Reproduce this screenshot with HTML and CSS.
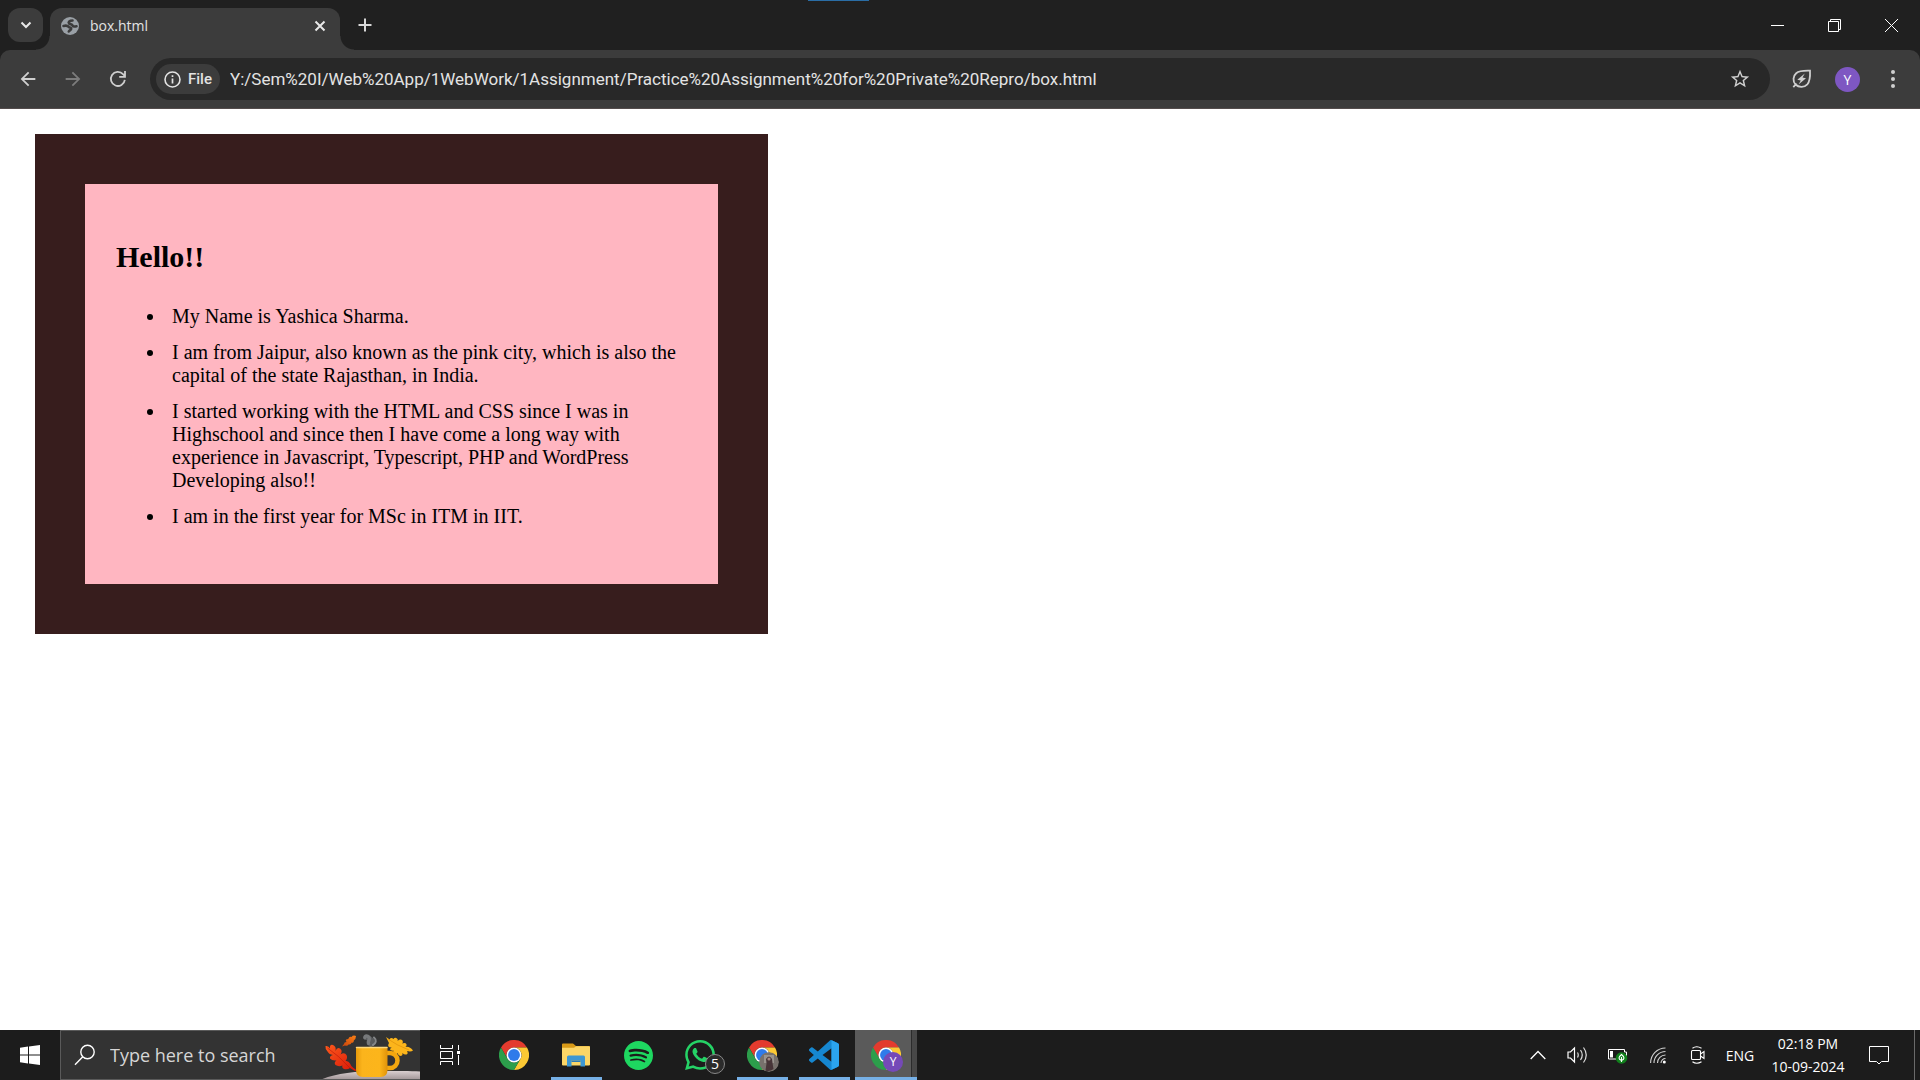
FILE: index.html
```html
<!DOCTYPE html>
<html lang="en">
<head>
<meta charset="utf-8">
<title>box.html</title>
<link rel="stylesheet" href="styles.css">
</head>
<body>
<svg class="defs" aria-hidden="true">
  <defs>
    <path id="wedge" d="M24 12H44.8A24 24 0 0 0 3.2 12L13.6 30A12 12 0 0 1 24 12Z"/>
    <symbol id="chrome" viewBox="0 0 48 48">
      <use href="#wedge" fill="#e33b2e"/>
      <use href="#wedge" fill="#fcc934" transform="rotate(120 24 24)"/>
      <use href="#wedge" fill="#2c9e4b" transform="rotate(240 24 24)"/>
      <circle cx="24" cy="24" r="12" fill="#fff"/>
      <circle cx="24" cy="24" r="9.5" fill="#2f7bea"/>
    </symbol>
  </defs>
</svg>

<header class="browser">
  <div class="tabstrip">
    <button class="tab-search" aria-label="Search tabs"><svg width="12" height="12" viewBox="0 0 12 12"><path d="M1.500 3.500L6 8l4.500-4.500" fill="none" stroke="#e8e8e8" stroke-width="2"/></svg></button>
    <div class="tab">
      <svg width="18" height="18" viewBox="0 0 18 18"><circle cx="9" cy="9" r="9" fill="#9aa0a6"/><path d="M11.500 3.500C8.500 3.500 7 5 8 6.300c1 1.200 3 .8 3.500 2.200.4 1.200 1.700 1.300 4 .8M2.500 9c2-.5 4-.5 5 .7.800 1.200 2.700.5 2.700 2 0 1.300-1.700 1.300-2.400 2.800" fill="none" stroke="#3c3c3c" stroke-width="2.600" stroke-linecap="round"/></svg>
      <span class="tab-title">box.html</span>
      <button class="tab-close" aria-label="Close tab"><svg width="12" height="12" viewBox="0 0 12 12"><path d="M1.500 1.500l9 9M10.500 1.500l-9 9" stroke="#e8e8e8" stroke-width="2"/></svg></button>
    </div>
    <button class="new-tab" aria-label="New tab"><svg width="14" height="14" viewBox="0 0 14 14"><path d="M7 .5v13M.5 7h13" stroke="#d8d8d8" stroke-width="2"/></svg></button>
    <span class="drag-mark"></span>
    <div class="window-controls">
      <button aria-label="Minimize"><svg width="13" height="13" viewBox="0 0 13 13"><path d="M0 6.500h13" stroke="#fff"/></svg></button>
      <button aria-label="Restore"><svg width="13" height="13" viewBox="0 0 13 13"><path d="M.5 2.500h10v10H.5zM2.500 2.500v-2h10v10h-2" fill="none" stroke="#fff"/></svg></button>
      <button aria-label="Close"><svg width="13" height="13" viewBox="0 0 13 13"><path d="M0 0l13 13M13 0L0 13" stroke="#fff"/></svg></button>
    </div>
  </div>
  <div class="toolbar">
    <nav class="nav-buttons">
      <button aria-label="Back"><svg width="22" height="22" viewBox="0 0 24 24" fill="#cfcfcf"><path d="M20 11H7.830l5.590-5.590L12 4l-8 8 8 8 1.410-1.410L7.830 13H20v-2z"/></svg></button>
      <button aria-label="Forward" disabled><svg width="22" height="22" viewBox="0 0 24 24" fill="#7c7c7c"><path d="M4 11h12.170l-5.590-5.590L12 4l8 8-8 8-1.410-1.410L16.170 13H4v-2z"/></svg></button>
      <button aria-label="Reload"><svg width="18" height="18" viewBox="0 0 18 18"><path d="M15.800 9.800A7 7 0 1 1 14 4.200L16 6.200M16 1v5.800h-5.800" fill="none" stroke="#cfcfcf" stroke-width="1.800"/></svg></button>
    </nav>
    <div class="omnibox">
      <button class="file-chip"><svg width="17" height="17" viewBox="0 0 17 17"><circle cx="8.500" cy="8.500" r="7.500" fill="none" stroke="#e3e3e3" stroke-width="1.600"/><path d="M8.500 7.500v5M8.500 4.200v1.800" stroke="#e3e3e3" stroke-width="1.700"/></svg>File</button>
      <input class="url" type="text" aria-label="Address" value="Y:/Sem%20I/Web%20App/1WebWork/1Assignment/Practice%20Assignment%20for%20Private%20Repro/box.html">
      <button class="star" aria-label="Bookmark this tab"><svg width="22" height="22" viewBox="0 0 24 24" fill="#cfcfcf"><path d="M22 9.240l-7.190-.62L12 2 9.190 8.630 2 9.240l5.460 4.730L5.820 21 12 17.270 18.180 21l-1.630-7.030L22 9.240zM12 15.400l-3.760 2.270 1-4.280-3.320-2.880 4.380-.38L12 6.100l1.710 4.040 4.380.38-3.320 2.880 1 4.280L12 15.400z"/></svg></button>
    </div>
    <div class="actions">
      <button aria-label="Energy saver"><svg width="20" height="20" viewBox="0 0 20 20"><path d="M3.500 15.500C.5 12 1 7 4.200 4.200 7.200 1.600 12 1.500 18 1.700c.3 6 .2 10.300-2.700 13.600-3 3.200-8.300 3.500-11.800.2zM4.500 14.500L1.300 18.200" fill="none" stroke="#cfcfcf" stroke-width="1.800"/><path d="M12.800 4.500L5.300 10.800l3.500.6-2.300 4.100 7.500-6.300-3.500-.6z" fill="#cfcfcf"/></svg></button>
      <button class="avatar" aria-label="Profile">Y</button>
      <button aria-label="Menu"><svg width="6" height="20" viewBox="0 0 6 20" fill="#cfcfcf"><circle cx="3" cy="3" r="2"/><circle cx="3" cy="10" r="2"/><circle cx="3" cy="17" r="2"/></svg></button>
    </div>
  </div>
</header>

<main class="page">
  <section class="box">
    <h2>Hello!!</h2>
    <ul>
      <li>My Name is Yashica Sharma.</li>
      <li>I am from Jaipur, also known as the pink city, which is also the capital of the state Rajasthan, in India.</li>
      <li>I started working with the HTML and CSS since I was in Highschool and since then I have come a long way with experience in Javascript, Typescript, PHP and WordPress Developing also!!</li>
      <li>I am in the first year for MSc in ITM in IIT.</li>
    </ul>
  </section>
</main>

<footer class="taskbar">
  <button class="start" aria-label="Start"><svg width="20" height="20" viewBox="0 0 20 20" fill="#fff"><path d="M0 2.700L8 1.600V9.500H0zM9 1.400L20 0V9.500H9zM0 10.500H8V18.400L0 17.300zM9 10.500H20V20L9 18.600z"/></svg></button>
  <label class="search">
    <svg width="22" height="22" viewBox="0 0 22 22"><circle cx="13.500" cy="8" r="6.700" fill="none" stroke="#fff" stroke-width="1.400"/><path d="M8.800 12.800L1 20.800" stroke="#fff" stroke-width="1.400"/></svg>
    <input type="text" aria-label="Search" placeholder="Type here to search">
    <svg width="100" height="48" viewBox="0 1 100 48">
      <defs>
        <linearGradient id="mug" x1="0" x2="1"><stop offset="0" stop-color="#e69a0c"/><stop offset=".2" stop-color="#fbb41c"/><stop offset=".75" stop-color="#fcb51b"/><stop offset="1" stop-color="#e0930a"/></linearGradient>
        <linearGradient id="red" x1="0" y1="0" x2="1" y2="1"><stop offset="0" stop-color="#ff5a1c"/><stop offset="1" stop-color="#d41408"/></linearGradient>
        <linearGradient id="orange" x1="1" y1="0" x2="0" y2="1"><stop offset="0" stop-color="#f98016"/><stop offset="1" stop-color="#c9430c"/></linearGradient>
        <linearGradient id="table" x1="0" x2="0" y1="0" y2="1"><stop offset="0" stop-color="#d9cfd0"/><stop offset="1" stop-color="#9f9395"/></linearGradient>
      </defs>
      <path d="M0 50C14 44 34 41 60 41 78 41 90 41 100 41.500V50z" fill="url(#table)"/>
      <path d="M51 14.500C55 12 50 8 46.500 7.500" fill="none" stroke="#595b5d" stroke-width="5" stroke-linecap="round"/>
      <path d="M48.500 13.500c-1-2 1.500-3.500.5-6-1-2.200-4-2-4.200.2" fill="none" stroke="#77797b" stroke-width="3.500" stroke-linecap="round"/>
      <path d="M53 15c3-1.500 4-5 1-7.500" fill="none" stroke="#848688" stroke-width="2" stroke-linecap="round"/>
      <path d="M5.500 16q3-.6 4.500 2.500Q9.500 14 13 15q3.500 1.500 2.500 6Q17 17 20 18.500q3 2 .5 6 4-2.500 6 .5 1.500 3-1 6 3-.5 4.500 2.500 1 3 3.500 4.500l3.500 2.500-2 .5-5-3q-2.500 2-6 1-2.500-1.500-1.500-3.500-4 1.500-7-.5-2-2.500 1-4.500-4.500.5-6.500-2-.5-3 3-3.500-4-.5-5.500-3.500Q5 19 5.500 16z" fill="url(#red)"/>
      <path d="M7.500 18Q18 25 30 38" fill="none" stroke="#b81508" stroke-width=".6"/>
      <path d="M36 6q-3-1.200-4.500 1-2.200-1-3 1.500.2 1-2 .8-1.500 1.200 0 2.700-2.500 0-2.500 2L22 16.500l3-1q2.500 1 3.500-1 2.500.5 3-1.700 2.500 0 2.300-2.300Q36 9 36 6z" fill="url(#orange)"/>
      <path d="M66 7l3.500 2.500Q71 7 73.500 9q1.500-2 3.500-.5 1.500 1 .5 2.500 3-2.500 5-.5 1.200 1.800-.5 3 3.500-1.200 4.500.8.500 1.700-1 2.700 4-1 7.500 3.500-2 1.500-6 .5 1.500 2.500-.5 3.500-2.500.5-4-1.500.5 2.500-1.500 3-2.500 0-3.500-3-1 2-3 1-2-1.500-1-3.500-2.500.5-3.500-1 .5-2 2-2-2.500.3-3.500-1-1-1.500.5-3.500z" fill="#fcb51b"/>
      <path d="M68 9Q76 15 89 20" fill="none" stroke="#d98909" stroke-width=".6"/>
      <path d="M66 23h4a7.300 7.300 0 0 1 0 15h-4" fill="none" stroke="#f3a70f" stroke-width="4.500"/>
      <path d="M36 17.500h31.500V40q0 7-7 7H43q-7 0-7-7z" fill="url(#mug)"/>
      <path d="M36.500 17.500h30.500" stroke="#ffd879" stroke-width="1.500" stroke-linecap="round"/>
    </svg>
  </label>
  <button class="task-view" aria-label="Task view"><svg width="20" height="20" viewBox="0 0 20 20" fill="none" stroke="#fff"><path d="M.5 0v3.500h12V0M.5 6.500h12v7H.5zM.5 20v-3.500h12V20M18.500 0v5M18.500 10v10"/><path d="M17 6h3v3h-3z" fill="#fff" stroke="none"/></svg></button>
  <nav class="apps">
    <button class="app" aria-label="Chrome"><svg width="30" height="30"><use href="#chrome"/></svg></button>
    <button class="app open" aria-label="File Explorer"><svg width="28" height="24" viewBox="0 0 28 24"><path d="M0 1.500Q0 .5 1 .5h10l3 2.500h13q1 0 1 1v18H0z" fill="#d99a17"/><path d="M0 4.800h12l2-1.600h13q1 0 1 1V21.500q0 1-1 1H1q-1 0-1-1z" fill="#fcd667"/><path d="M5 23.500V14q0-1.500 1.500-1.500h15Q23 12.500 23 14v9.500h-4.500V17.500h-9v6z" fill="#3d97d3"/><path d="M9.500 17.500h9v1.500h-9z" fill="#2c7ab5"/></svg></button>
    <button class="app" aria-label="Spotify"><svg width="29" height="29" viewBox="0 0 24 24"><path fill="#1ed760" d="M12 0C5.400 0 0 5.400 0 12s5.400 12 12 12 12-5.400 12-12S18.660 0 12 0zm5.521 17.340c-.24.359-.66.48-1.021.24-2.820-1.740-6.360-2.101-10.561-1.141-.418.122-.779-.179-.899-.539-.12-.421.18-.78.54-.9 4.560-1.021 8.520-.6 11.640 1.320.42.18.479.659.301 1.020zm1.440-3.300c-.301.42-.841.6-1.262.3-3.239-1.980-8.159-2.580-11.939-1.380-.479.12-1.020-.12-1.140-.6-.12-.48.12-1.021.6-1.141C9.600 9.900 15 10.561 18.720 12.840c.361.181.54.78.241 1.200zm.12-3.360C15.240 8.400 8.820 8.160 5.160 9.301c-.6.179-1.200-.181-1.380-.721-.18-.601.18-1.200.72-1.381 4.260-1.260 11.280-1.020 15.721 1.621.539.3.719 1.020.419 1.560-.299.421-1.020.599-1.559.3z"/></svg></button>
    <button class="app" aria-label="WhatsApp, 5 unread"><span class="app-icon"><svg width="30" height="30" viewBox="0 0 24 24"><path fill="#25d366" d="M17.472 14.382c-.297-.149-1.758-.867-2.030-.967-.273-.099-.471-.148-.67.15-.197.297-.767.966-.94 1.164-.173.199-.347.223-.644.075-.297-.15-1.255-.463-2.390-1.475-.883-.788-1.480-1.761-1.653-2.059-.173-.297-.018-.458.13-.606.134-.133.298-.347.446-.52.149-.174.198-.298.298-.497.099-.198.05-.371-.025-.52-.075-.149-.669-1.612-.916-2.207-.242-.579-.487-.5-.669-.51-.173-.008-.371-.01-.57-.01-.198 0-.52.074-.792.372-.272.297-1.040 1.016-1.040 2.479 0 1.462 1.065 2.875 1.213 3.074.149.198 2.096 3.200 5.077 4.487.709.306 1.262.489 1.694.625.712.227 1.360.195 1.871.118.571-.085 1.758-.719 2.006-1.413.248-.694.248-1.289.173-1.413-.074-.124-.272-.198-.57-.347m-5.421 7.403h-.004a9.870 9.870 0 01-5.031-1.378l-.361-.214-3.741.982.998-3.648-.235-.374a9.860 9.860 0 01-1.510-5.260c.001-5.450 4.436-9.884 9.888-9.884 2.640 0 5.122 1.030 6.988 2.898a9.825 9.825 0 012.893 6.994c-.003 5.450-4.437 9.884-9.885 9.884m8.413-18.297A11.815 11.815 0 0012.050 0C5.495 0 .16 5.335.157 11.892c0 2.096.547 4.142 1.588 5.945L.057 24l6.305-1.654a11.882 11.882 0 005.683 1.448h.005c6.554 0 11.890-5.335 11.893-11.893a11.821 11.821 0 00-3.480-8.413z"/></svg><span class="count">5</span></span></button>
    <button class="app open" aria-label="Chrome, second profile"><span class="app-icon"><svg width="30" height="30"><use href="#chrome"/></svg><svg class="profile" width="20" height="20" viewBox="0 0 20 20"><circle cx="10" cy="10" r="10" fill="#77716c"/><path d="M5 3h10v8H5z" fill="#99948e"/><path d="M7 7q3-5 6 0l.5 4 1 6q-4 3-8 1.500l1-7z" fill="#473538"/><circle cx="10" cy="7" r="1.600" fill="#a58b83"/></svg></span></button>
    <button class="app open" aria-label="Visual Studio Code"><svg width="30" height="30" viewBox="0 0 24 24"><path fill="#1687d0" d="M23.150 2.587L18.210.21a1.494 1.494 0 0 0-1.705.29l-9.460 8.630-4.120-3.128a.999.999 0 0 0-1.276.057L.327 7.261A1 1 0 0 0 .326 8.740L3.899 12 .326 15.260a1 1 0 0 0 .001 1.479L1.650 17.940a.999.999 0 0 0 1.276.057l4.120-3.128 9.460 8.630a1.492 1.492 0 0 0 1.704.29l4.942-2.377A1.500 1.500 0 0 0 24 20.060V3.939a1.500 1.500 0 0 0-.85-1.352zm-5.146 14.861L10.826 12l7.178-5.448v10.896z"/><path fill="#2ba4ee" d="M18 .15l5.150 2.437A1.500 1.500 0 0 1 24 3.939V20.060a1.500 1.500 0 0 1-.85 1.352L18 23.850z"/></svg></button>
    <button class="app open active" aria-label="Chrome, profile Y"><span class="app-icon"><svg width="30" height="30"><use href="#chrome"/></svg><span class="profile letter">Y</span></span></button>
  </nav>
  <div class="tray">
    <button aria-label="Show hidden icons"><svg width="16" height="10" viewBox="0 0 16 10"><path d="M.7 9L8 1.500 15.300 9" fill="none" stroke="#fff" stroke-width="1.300"/></svg></button>
    <button aria-label="Volume"><svg width="22" height="18" viewBox="0 0 22 18" fill="none" stroke="#fff" stroke-width="1.200"><path d="M1 6h2.500l4-4v14l-4-4H1z"/><path d="M10.500 6.500q1.500 2.500 0 5M13.500 4q3.500 5 0 10M16.500 1.500q5.500 7.500 0 15" opacity=".85"/></svg></button>
    <button aria-label="Battery"><svg width="20" height="17" viewBox="0 0 20 17"><path d="M.5 2.500h16v2.500h2v5h-2v2H.5z" fill="none" stroke="#fff"/><path d="M2 4h3v6.500H2z" fill="#fff"/><circle cx="13.500" cy="11" r="5.800" fill="#10801c"/><path d="M13.500 7.500q5 4 0 6-5-2 0-6zM13.500 10v5" fill="none" stroke="#fff" stroke-width="1.100"/></svg></button>
    <button aria-label="Network"><svg width="16" height="17" viewBox="0 0 16 17" fill="none" stroke="#fff" stroke-width="1.100"><path d="M.6 16A15 15 0 0 1 15.500 1M4 16A11.500 11.500 0 0 1 15.500 4.500M7.500 16a8 8 0 0 1 8-8M11 16a4.500 4.500 0 0 1 4.500-4.500" opacity=".8"/><circle cx="14.300" cy="15" r="1.500" fill="#fff" stroke="none"/></svg></button>
    <button aria-label="Meet now"><svg width="16" height="18" viewBox="0 0 16 18" fill="none" stroke="#fff" stroke-width="1.100"><rect x="1.500" y="4.500" width="9" height="9" rx="1"/><path d="M10.500 8l3.500-2.500v7L10.500 10M2.500 2.200q4-3 9 0M2.500 15.800q4 3 9 0"/></svg></button>
    <button class="lang">ENG</button>
    <button class="clock"><time datetime="2024-09-10T14:18">02:18 PM<br>10-09-2024</time></button>
    <button class="notes" aria-label="Notifications"><svg width="20" height="20" viewBox="0 0 20 20"><path d="M.5 1.500h19v15h-7L10 19l-2.500-2.500h-7z" fill="none" stroke="#fff"/></svg></button>
    <button class="peek" aria-label="Show desktop"></button>
  </div>
</footer>
</body>
</html>
```
FILE: styles.css
```css
* {
  box-sizing: border-box;
}

body {
  margin: 0;
  min-height: 100vh;
  display: flex;
  flex-direction: column;
  background: #fff;
  font-family: "Open Sans", "Noto Sans", sans-serif;
}

button,
input {
  margin: 0;
  padding: 0;
  border: 0;
  background: none;
  color: inherit;
  font: inherit;
  outline: 0;
}

button {
  display: flex;
  align-items: center;
  justify-content: center;
}

svg {
  display: block;
  flex: none;
}

.defs {
  position: absolute;
  width: 0;
  height: 0;
}

/* Browser window */

.browser {
  background: #202020;
  color: #e3e3e3;
}

.tabstrip {
  position: relative;
  display: flex;
  height: 50px;
  padding: 8px 0 0 8px;
}

.tab-search {
  width: 35px;
  height: 34px;
  border-radius: 12px;
  background: #3c3c3c;
}

.tab {
  position: relative;
  display: flex;
  align-items: center;
  width: 290px;
  margin-left: 7px;
  padding: 0 14px 6px 11px;
  gap: 11px;
  border-radius: 12px 12px 0 0;
  background: #3c3c3c;
}

.tab::before,
.tab::after {
  content: "";
  position: absolute;
  bottom: 0;
  width: 14px;
  height: 14px;
}

.tab::before {
  right: 100%;
  background: radial-gradient(circle at 0 0, transparent 13px, #3c3c3c 14px);
}

.tab::after {
  left: 100%;
  background: radial-gradient(circle at 100% 0, transparent 13px, #3c3c3c 14px);
}

.tab-title {
  flex: 1;
  font-size: 14px;
  line-height: 20px;
}

.new-tab {
  width: 50px;
  height: 34px;
}

.drag-mark {
  position: absolute;
  top: 0;
  left: 681px;
  width: 188px;
  height: 1px;
}

.drag-mark::after {
  content: "";
  position: absolute;
  right: 0;
  width: 61px;
  height: 1px;
  background: #2a6da5;
}

.window-controls {
  display: flex;
  height: 34px;
  margin-left: auto;
}

.window-controls button {
  width: 57px;
}

.toolbar {
  display: flex;
  align-items: center;
  height: 59px;
  padding: 0 5px;
  border-bottom: 1px solid #534c4c;
  border-radius: 10px 10px 0 0;
  background: #3c3c3c;
}

.nav-buttons {
  display: flex;
  width: 145px;
}

.nav-buttons button {
  width: 45px;
  height: 42px;
}

.omnibox {
  display: flex;
  flex: 1;
  align-items: center;
  height: 42px;
  padding: 0 19px 0 6px;
  border-radius: 21px;
  background: #282828;
}

.file-chip {
  width: 64px;
  height: 30px;
  gap: 7px;
  border-radius: 15px;
  background: #3c3c3c;
  font-family: Roboto, "Open Sans", sans-serif;
  font-size: 15px;
  font-weight: 500;
}

.url {
  flex: 1;
  margin-left: 10px;
  height: 30px;
  font-family: Roboto, "Open Sans", sans-serif;
  font-size: 17px;
}

.actions {
  display: flex;
  align-items: center;
  padding-left: 10px;
}

.actions button {
  width: 44px;
  height: 30px;
}

.actions .avatar {
  width: 25px;
  height: 25px;
  margin: 0 11px;
  border-radius: 50%;
  background: #7e57c2;
  color: #fff;
  font-size: 14px;
}

/* Document */

.page {
  flex: 1;
  padding: 25px 35px;
}

.box {
  width: 733px;
  max-width: 100%;
  min-height: 500px;
  padding: 30px 31px;
  border: 50px solid #371d1d;
  background: #ffb6c1;
  color: #000;
  font-family: "Liberation Serif", "Times New Roman", serif;
  font-size: 20px;
  line-height: 23px;
}

.box h2 {
  margin: 25px 0;
  font-size: 30px;
  line-height: 35px;
}

.box ul {
  margin: 0;
  padding-left: 50px;
}

.box li {
  padding: 6px;
  margin-bottom: 1px;
}

/* Taskbar */

.taskbar {
  display: flex;
  height: 50px;
  background: #1c1c1c;
  color: #fff;
}

.start {
  width: 60px;
}

.search {
  display: flex;
  align-items: center;
  width: 360px;
  padding-left: 13px;
  border: 1px solid #5a5a5a;
  border-right-width: 0;
  background: #333;
}

.search input {
  flex: 1;
  min-width: 0;
  margin-left: 14px;
  color: #d6d6d6;
  font-size: 18px;
}

.search input::placeholder {
  color: #d6d6d6;
  opacity: 1;
}

.task-view {
  width: 60px;
}

.apps {
  display: flex;
  margin-left: 3px;
}

.app {
  position: relative;
  width: 62px;
}

.app.open::after {
  content: "";
  position: absolute;
  right: 5px;
  bottom: 0;
  left: 6px;
  height: 3px;
  background: #76b0e6;
}

.app.active {
  background: linear-gradient(90deg, #5a5a5a 56px, #2c2c2c 56px, #2c2c2c 57px, #484848 57px);
}

.app.active::after {
  right: 0;
  left: 0;
}

.app-icon {
  position: relative;
}

.count,
.profile {
  position: absolute;
  width: 20px;
  height: 20px;
  border-radius: 50%;
}

.count {
  top: 14px;
  left: 20px;
  border: 1px solid #888;
  background: #2b2b2b;
  font-size: 14px;
  line-height: 18px;
}

.profile {
  top: 12px;
  left: 12px;
}

.letter {
  background: #7549b8;
  font-size: 12px;
  line-height: 20px;
}

.tray {
  display: flex;
  margin-left: auto;
}

.tray button {
  width: 40px;
}

.tray .lang {
  width: 44px;
  font-size: 14px;
}

.tray .clock {
  width: 92px;
  font-size: 14px;
  line-height: 23px;
}

.tray .notes {
  width: 50px;
}

.tray .peek {
  width: 6px;
  margin-left: 10px;
  border-left: 1px solid #6a6a6a;
}
```
